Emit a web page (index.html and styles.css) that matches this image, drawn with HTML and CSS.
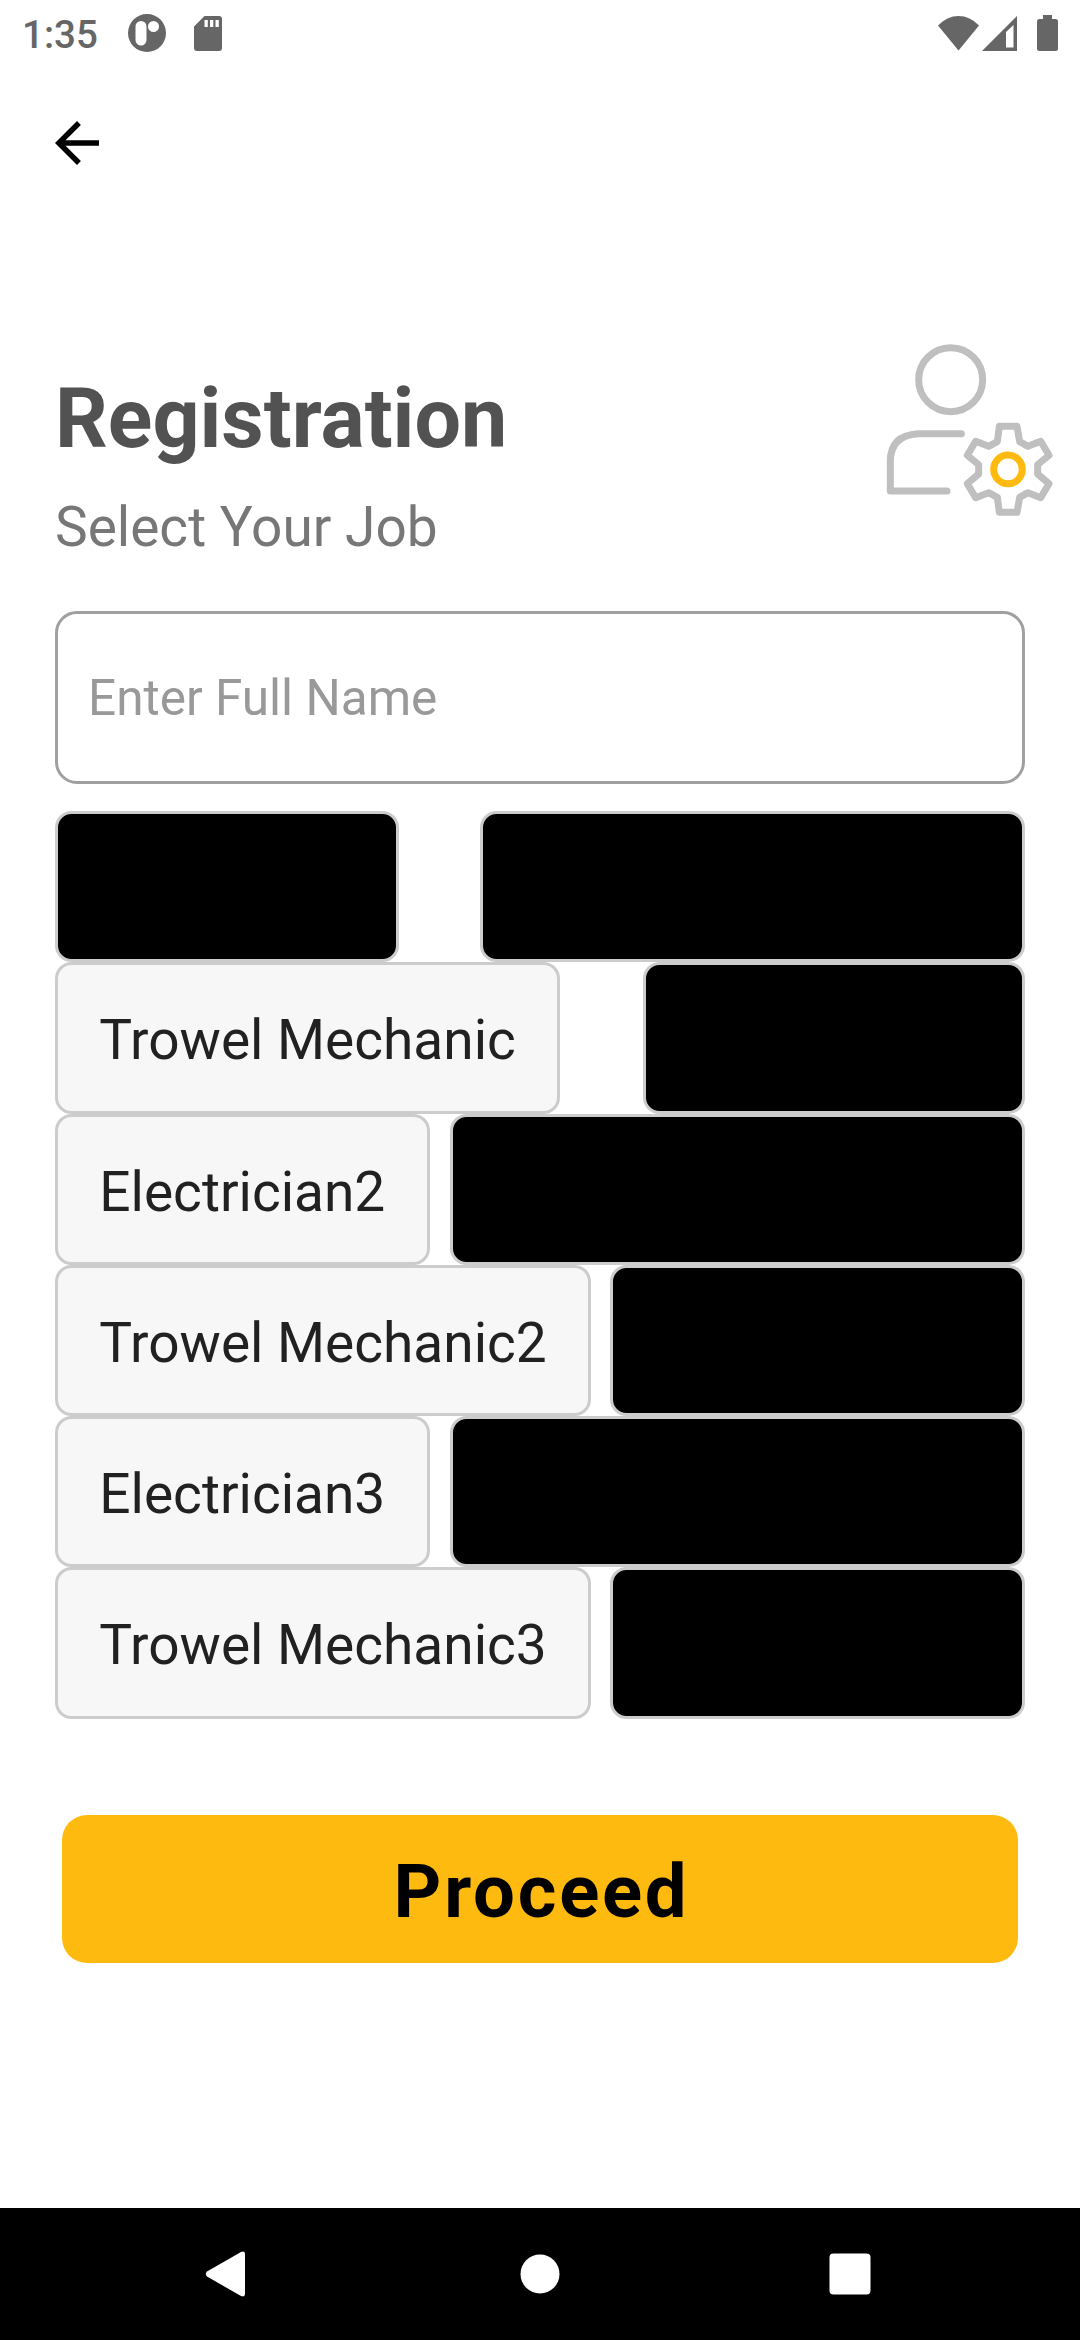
FILE: index.html
```html
<!DOCTYPE html>
<html lang="en">
<head>
<meta charset="utf-8">
<title>Registration</title>
<link rel="stylesheet" href="styles.css">
</head>
<body>
<div class="screen">
  <div class="status-bar">
    <span class="clock">1:35</span>
    <svg class="status-app" viewBox="0 0 38 38"><path fill-rule="evenodd" d="M19 0a19 19 0 1 0 0 38a19 19 0 1 0 0-38zM13 7a5.5 5.5 0 0 1 5.5 5.500v13.500a5.500 5.500 0 0 1-11 0v-13.500a5.500 5.500 0 0 1 5.500-5.500zM25.500 7a5.500 5.500 0 1 1 0 11a5.500 5.500 0 1 1 0-11z"/></svg>
    <svg class="status-card" viewBox="0 0 28 35"><path fill-rule="evenodd" d="M10.500 0H25a3 3 0 0 1 3 3v29a3 3 0 0 1-3 3H3a3 3 0 0 1-3-3V10.500zM10.500 4v7h3.300V4zM16 4v7h3.300V4zM21.500 4v7h3.300V4z"/></svg>
    <span class="spacer"></span>
    <svg class="status-wifi" viewBox="0 0 41 35"><path d="M0 9.500Q9 0 20.500 0T41 9.500L20.500 34.500z"/></svg>
    <svg class="status-signal" viewBox="0 0 35 35"><path fill-rule="evenodd" d="M0 35L35 0v35zM24 31.500h7.500V9L24 16z"/></svg>
    <svg class="status-battery" viewBox="0 0 21 36"><path d="M6 0h9v4h3.500a2.500 2.500 0 0 1 2.500 2.500v27a2.500 2.500 0 0 1-2.500 2.500h-16a2.500 2.500 0 0 1-2.500-2.500v-27a2.500 2.500 0 0 1 2.500-2.500h3.500z"/></svg>
  </div>
  <div class="app-bar">
    <svg class="back" viewBox="0 0 24 24"><path d="M20 11H7.830l5.590-5.590L12 4l-8 8 8 8 1.410-1.410L7.830 13H20z"/></svg>
  </div>
  <header class="heading">
    <div class="heading-text">
      <h1 class="title">Registration</h1>
      <p class="subtitle">Select Your Job</p>
    </div>
    <svg class="user-gear" viewBox="0 0 600 600">
      <circle cx="242" cy="149" r="96"/>
      <path d="M274 311H144Q61 316 61 394V483H231"/>
      <path d="M388 289H441L449 335L474 349L512 334L537 376L503 404V432L537 461L512 503L474 488L449 502L441 547H388L382 502L356 488L317 503L292 461L326 432V404L292 376L317 334L356 349L382 335Z"/>
      <circle class="hub" cx="414" cy="418" r="43"/>
    </svg>
  </header>
  <main class="form">
    <div class="field">Enter Full Name</div>
    <div class="jobs">
      <div class="row"><div class="chip dark w-344"></div><div class="chip dark w-545"></div></div>
      <div class="row"><div class="chip">Trowel Mechanic</div><div class="chip dark w-382"></div></div>
      <div class="row"><div class="chip">Electrician2</div><div class="chip dark w-575"></div></div>
      <div class="row"><div class="chip">Trowel Mechanic2</div><div class="chip dark w-415"></div></div>
      <div class="row"><div class="chip">Electrician3</div><div class="chip dark w-575"></div></div>
      <div class="row"><div class="chip">Trowel Mechanic3</div><div class="chip dark w-415"></div></div>
    </div>
    <div class="proceed">Proceed</div>
  </main>
  <nav class="nav-bar">
    <svg class="nav-icon" viewBox="0 0 60 60"><path d="M12 27.500L46 8Q50 6.500 50 10V50Q50 53.500 46 52L12 32.500Q9.500 30 12 27.500z"/></svg>
    <svg class="nav-icon home" viewBox="0 0 60 60"><circle cx="30" cy="30" r="19.500"/></svg>
    <svg class="nav-icon" viewBox="0 0 60 60"><rect x="9.500" y="9.500" width="41" height="41" rx="4"/></svg>
  </nav>
</div>
</body>
</html>
```

FILE: styles.css
```css
* { box-sizing: border-box; }

body {
  margin: 0;
  background: #fff;
  font-family: Roboto, sans-serif;
}

.screen {
  width: 1080px;
  height: 2340px;
  display: flex;
  flex-direction: column;
}

.status-bar {
  height: 66px;
  padding: 0 22px;
  display: flex;
  align-items: center;
  fill: #666;
  color: #666;
}

.clock {
  width: 106px;
  font-size: 38.500px;
  font-weight: 500;
  line-height: 66px;
  padding-top: 3px;
}

.status-app { width: 38px; height: 38px; }
.status-card { width: 28px; height: 35px; margin-left: 28px; }
.spacer { flex: 1; }
.status-wifi { width: 41px; height: 35px; margin-right: 3px; }
.status-signal { width: 35px; height: 35px; margin-right: 20px; }
.status-battery { width: 21px; height: 36px; }

.app-bar {
  height: 264px;
  padding: 44px 44px 0;
}

.back { display: block; width: 66px; height: 66px; }

.heading {
  height: 281px;
  padding: 0 10px 0 55px;
  display: flex;
  justify-content: space-between;
  align-items: flex-start;
}

.heading-text { padding-top: 39px; }

.title {
  margin: 0;
  font-size: 82.500px;
  font-weight: 700;
  line-height: 100px;
  color: #525252;
}

.subtitle {
  margin: 25px 0 0;
  font-size: 55px;
  line-height: 66px;
  color: #777;
}

.user-gear {
  width: 200px;
  height: 200px;
  fill: none;
  stroke: #bfbfbf;
  stroke-width: 21;
  stroke-linecap: round;
  stroke-linejoin: round;
}

.hub { stroke: #ffba10; }

.form {
  flex: 1;
  padding: 0 55px;
  display: flex;
  flex-direction: column;
}

.field {
  height: 173px;
  padding: 0 30px;
  border: 3px solid #a0a0a0;
  border-radius: 22px;
  font-size: 49.500px;
  line-height: 169px;
  color: #999;
}

.jobs {
  margin-top: 27px;
  display: grid;
  grid-auto-rows: 151.300px;
}

.row {
  display: flex;
  justify-content: space-between;
}

.chip {
  border: 3px solid #ccc;
  border-radius: 16.500px;
  padding: 0 41.300px;
  background: #f7f7f7;
  color: #212121;
  font-size: 55px;
  line-height: 150px;
  white-space: nowrap;
}

.dark { background: #000; padding: 0; }
.w-344 { width: 344px; }
.w-545 { width: 545px; }
.w-382 { width: 382px; }
.w-575 { width: 575px; }
.w-415 { width: 415px; }

.proceed {
  margin: 96px 7px 0;
  height: 148px;
  padding-left: 3px;
  border-radius: 25px;
  background: #ffba10;
  color: #000;
  font-size: 74.250px;
  font-weight: 700;
  letter-spacing: 2.750px;
  line-height: 154px;
  text-align: center;
}

.nav-bar {
  height: 132px;
  padding-left: 195px;
  background: #000;
  fill: #fff;
  display: flex;
  align-items: center;
}

.nav-icon { width: 60px; height: 60px; }
.home { margin: 0 250px 0 255px; }
```
